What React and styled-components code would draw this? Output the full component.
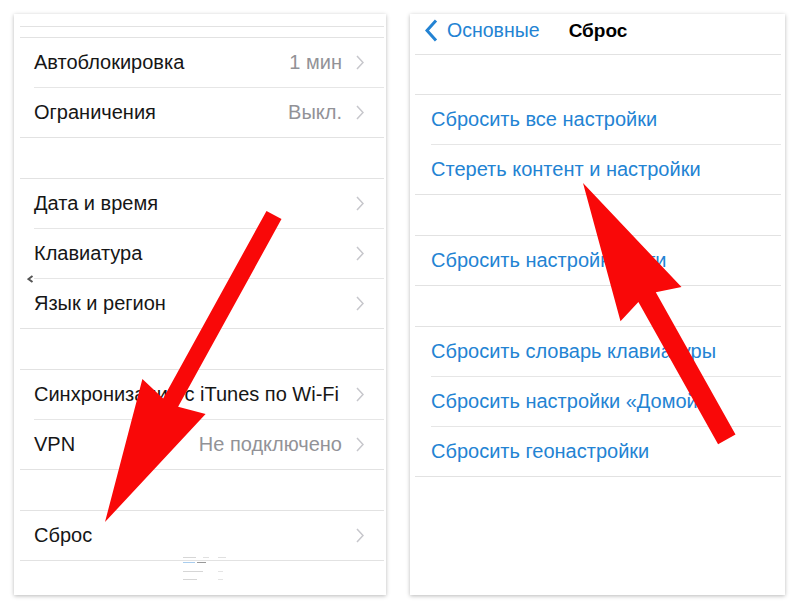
import React from "react";
import styled, { createGlobalStyle } from "styled-components";

const GlobalStyle = createGlobalStyle`
    body {
        margin: 0;
        background: #fff;
        font-family: "Liberation Sans", Arial, sans-serif;
    }
`;

const Page = styled.div`
    position: relative;
    width: 800px;
    height: 610px;
    box-sizing: border-box;
    padding: 14px 0 0 14px;
    display: flex;
    gap: 24px;
    overflow: hidden;
`;

const Panel = styled.div`
    position: relative;
    width: ${props => props.width}px;
    height: 581px;
    box-sizing: border-box;
    padding: ${props => props.padding};
    background: #fff;
    box-shadow: 0 1px 4px rgba(0, 0, 0, 0.28);
    display: flex;
    flex-direction: column;
`;

const Cap = styled.div`
    height: ${props => props.h}px;
    border-bottom: 1px solid #e2e2e2;
    flex-shrink: 0;
`;

const Gap = styled.div`
    height: ${props => props.h}px;
    flex-shrink: 0;
`;

const Group = styled.div`
    border-top: 1px solid #e2e2e2;
    border-bottom: 1px solid #e2e2e2;
    flex-shrink: 0;
`;

const Row = styled.div`
    padding-left: ${props => props.indent}px;
`;

const RowInner = styled.div`
    height: 49px;
    display: flex;
    align-items: center;
    padding-right: 20px;
    border-bottom: ${props => props.last ? "none" : "1px solid #e6e6e6"};
`;

const Label = styled.span`
    flex: 1;
    font-size: 20px;
    color: ${props => props.blue ? "#2383d3" : "#161616"};
    white-space: nowrap;
`;

const Value = styled.span`
    font-size: 20px;
    color: #929297;
    margin-right: 14px;
    white-space: nowrap;
`;

const NavBar = styled.div`
    height: 41px;
    box-sizing: border-box;
    padding-bottom: 7px;
    border-bottom: 1px solid #e2e2e2;
    display: grid;
    grid-template-columns: 1fr auto 1fr;
    align-items: center;
    flex-shrink: 0;
`;

const BackButton = styled.div`
    display: flex;
    align-items: center;
    gap: 9px;
    padding-left: 10px;
    color: #2383d3;
    font-size: 19.5px;
`;

const Title = styled.div`
    font-size: 19px;
    font-weight: bold;
    color: #000;
`;

const Marker = styled.svg`
    position: absolute;
    left: ${props => props.x}px;
    top: ${props => props.y}px;
`;

const Overlay = styled.svg`
    position: absolute;
    left: 0;
    top: 0;
    pointer-events: none;
`;

const Chevron = () => (
    <svg width="8" height="15" viewBox="0 0 8 15">
        <polyline points="1,1 7,7.5 1,14" fill="none" stroke="#c7c7cc" strokeWidth="1.5" />
    </svg>
);

const leftGroups = [
    [{ label: "Автоблокировка", value: "1 мин" }, { label: "Ограничения", value: "Выкл." }],
    [{ label: "Дата и время" }, { label: "Клавиатура" }, { label: "Язык и регион" }],
    [{ label: "Синхронизация с iTunes по Wi-Fi" }, { label: "VPN", value: "Не подключено" }],
    [{ label: "Сброс" }],
];

const rightGroups = [
    ["Сбросить все настройки", "Стереть контент и настройки"],
    ["Сбросить настройки сети"],
    ["Сбросить словарь клавиатуры", "Сбросить настройки «Домой»", "Сбросить геонастройки"],
];

const App = () => {
    return (
        <>
            <GlobalStyle />
            <Page>
                <Panel width={372} padding="0 2px 0 6px">
                    <Cap h={12} />
                    <Gap h={10} />
                    {leftGroups.map((group, gi) => (
                        <React.Fragment key={gi}>
                            {gi > 0 && <Gap h={40} />}
                            <Group>
                                {group.map((item, i) => (
                                    <Row indent={14} key={item.label}>
                                        <RowInner last={i === group.length - 1}>
                                            <Label>{item.label}</Label>
                                            {item.value && <Value>{item.value}</Value>}
                                            <Chevron />
                                        </RowInner>
                                    </Row>
                                ))}
                            </Group>
                        </React.Fragment>
                    ))}

                    <Marker x={13} y={261} width="7" height="8" viewBox="0 0 7 8">
                        <polyline points="5.5,1 1.5,4 5.5,7" fill="none" stroke="#555" strokeWidth="2" />
                    </Marker>

                    <Marker x={169} y={542} width="48" height="28" viewBox="0 0 48 28">
                        <rect x="0" y="1" width="13" height="1" fill="#d6d6d6" />
                        <rect x="20" y="1" width="6" height="1" fill="#e0e0e0" />
                        <rect x="35" y="1" width="8" height="1" fill="#e0e0e0" />
                        <rect x="0" y="6" width="12" height="1" fill="#a9cdee" />
                        <rect x="14" y="6" width="9" height="1" fill="#999" />
                        <rect x="0" y="15" width="20" height="1" fill="#d6d6d6" />
                        <rect x="35" y="15" width="5" height="1" fill="#e4e4e4" />
                        <rect x="0" y="23" width="14" height="1" fill="#d6d6d6" />
                        <rect x="35" y="23" width="5" height="1" fill="#e4e4e4" />
                    </Marker>
                </Panel>

                <Panel width={375} padding="0 4px 0 5px">
                    <NavBar>
                        <BackButton>
                            <svg width="13" height="23" viewBox="0 0 13 23">
                                <polyline points="11,1.5 2,11.5 11,21.5" fill="none" stroke="#2383d3" strokeWidth="3" />
                            </svg>
                            Основные
                        </BackButton>
                        <Title>Сброс</Title>
                        <div />
                    </NavBar>
                    <Gap h={39} />
                    {rightGroups.map((group, gi) => (
                        <React.Fragment key={gi}>
                            {gi > 0 && <Gap h={40} />}
                            <Group>
                                {group.map((label, i) => (
                                    <Row indent={16} key={label}>
                                        <RowInner last={i === group.length - 1}>
                                            <Label blue>{label}</Label>
                                        </RowInner>
                                    </Row>
                                ))}
                            </Group>
                        </React.Fragment>
                    ))}
                </Panel>

                <Overlay width="800" height="610" viewBox="0 0 800 610">
                    <polygon
                        fill="#f90808"
                        points="266.5,210.9 281.5,219.1 178.1,406.8 205.6,413.9 105,522 142.4,379.1 163.1,398.6"
                    />
                    <polygon
                        fill="#f90808"
                        points="583,183 681.5,287.1 655.8,292.3 735.5,434.5 718.1,444.3 638.4,302.1 620.5,321.3"
                    />
                </Overlay>
            </Page>
        </>
    );
};

export default App;
